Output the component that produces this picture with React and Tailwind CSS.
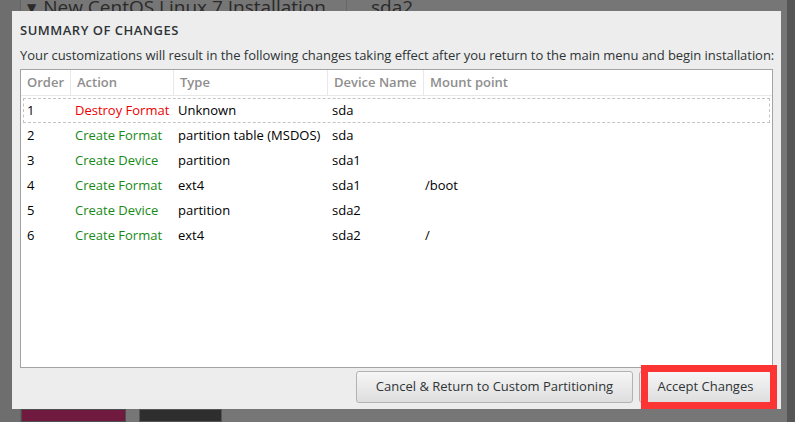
import React from 'react';

const rows = [
    { order: '1', action: 'Destroy Format', destroy: true, type: 'Unknown', device: 'sda', mount: '' },
    { order: '2', action: 'Create Format', type: 'partition table (MSDOS)', device: 'sda', mount: '' },
    { order: '3', action: 'Create Device', type: 'partition', device: 'sda1', mount: '' },
    { order: '4', action: 'Create Format', type: 'ext4', device: 'sda1', mount: '/boot' },
    { order: '5', action: 'Create Device', type: 'partition', device: 'sda2', mount: '' },
    { order: '6', action: 'Create Format', type: 'ext4', device: 'sda2', mount: '/' },
];

const font = { fontFamily: '"Open Sans", "DejaVu Sans", sans-serif' };

const App = () => {
    return (
        <div className="relative w-[795px] h-[422px] overflow-hidden bg-[#767676]" style={font}>
            {/* dimmed page behind the dialog */}
            <div className="flex h-full">
                <div className="w-[21px] h-full bg-[#6e6e6e] border-r border-[#626262]" />
                <div className="flex flex-col flex-1">
                    <div className="flex h-[11px] overflow-visible">
                        <div className="w-[326px] border-r border-[#666] pl-[6px] text-[19px] leading-[22px] -mt-[4px] text-[#2a2a2a] whitespace-nowrap">
                            <span className="text-[12px] mr-[7px] align-[2px]">▼</span>New CentOS Linux 7 Installation
                        </div>
                        <div className="pl-[24px] text-[19px] leading-[22px] -mt-[4px] text-[#2a2a2a]">sda2</div>
                    </div>
                    <div className="flex-1" />
                    <div className="flex gap-[13px] h-[13px]">
                        <div className="w-[105px] bg-[#6f1a3e] border border-[#4e4e4e]" />
                        <div className="w-[83px] bg-[#2e2e2e] border border-[#555]" />
                    </div>
                </div>
                <div className="w-[8px] h-full bg-[#565656]" />
            </div>

            {/* dialog */}
            <div className="absolute left-[12px] top-[11px] w-[769px] h-[398px] bg-[#ededed] px-[8px] flex flex-col">
                <div className="pt-[11px] text-[13px] leading-[16px] font-semibold text-[#2e3436] tracking-[0.5px]">SUMMARY OF CHANGES</div>
                <div className="mt-[9px] text-[13px] leading-[16px] text-[#2e3436] whitespace-nowrap tracking-[-0.05px]">
                    Your customizations will result in the following changes taking effect after you return to the main menu and begin installation:
                </div>
                <div className="mt-[6px] w-[753px] h-[299px] bg-white border border-[#a3a3a3] text-[13px]">
                    <div className="flex h-[26px] items-center border-b border-[#e8e8e8] text-[#8e8e8e] font-semibold">
                        <div className="w-[50px] pl-[6px] h-full flex items-center border-r border-[#e8e8e8]">Order</div>
                        <div className="w-[103px] pl-[6px] h-full flex items-center border-r border-[#e8e8e8]">Action</div>
                        <div className="w-[154px] pl-[6px] h-full flex items-center border-r border-[#e8e8e8]">Type</div>
                        <div className="w-[96px] pl-[6px] h-full flex items-center border-r border-[#e8e8e8]">Device Name</div>
                        <div className="flex-1 pl-[6px] h-full flex items-center">Mount point</div>
                    </div>
                    <div className="pt-[2px] px-[2px]">
                        {rows.map((r, i) => (
                            <div
                                key={r.order}
                                className={`flex h-[25px] items-center text-black ${i === 0 ? 'border border-dashed border-[#c4c4c4]' : 'border border-transparent'}`}
                            >
                                <div className="w-[48px] pl-[3px]">{r.order}</div>
                                <div className={`w-[103px] pl-[3px] ${r.destroy ? 'text-[#ee0000]' : 'text-[#168a16]'}`}>{r.action}</div>
                                <div className="w-[154px] pl-[3px]">{r.type}</div>
                                <div className="w-[93px] pl-[3px]">{r.device}</div>
                                <div className="flex-1 pl-[3px]">{r.mount}</div>
                            </div>
                        ))}
                    </div>
                </div>
                <div className="mt-[3px] flex justify-end gap-[6px] pr-[1px]">
                    <button className="w-[277px] h-[32px] rounded-[3px] border border-[#b3b3b3] bg-gradient-to-b from-[#f6f6f6] to-[#dedede] text-[13px] text-[#2e3436]">
                        Cancel &amp; Return to Custom Partitioning
                    </button>
                    <button className="w-[133px] h-[32px] rounded-[3px] border border-[#b3b3b3] bg-gradient-to-b from-[#f6f6f6] to-[#dedede] text-[13px] text-[#2e3436]">
                        Accept Changes
                    </button>
                </div>
            </div>

            {/* red highlight */}
            <div className="absolute left-[641px] top-[365px] w-[136px] h-[44px] border-[7px] border-[#fc3434]" />
        </div>
    );
};

export default App;
